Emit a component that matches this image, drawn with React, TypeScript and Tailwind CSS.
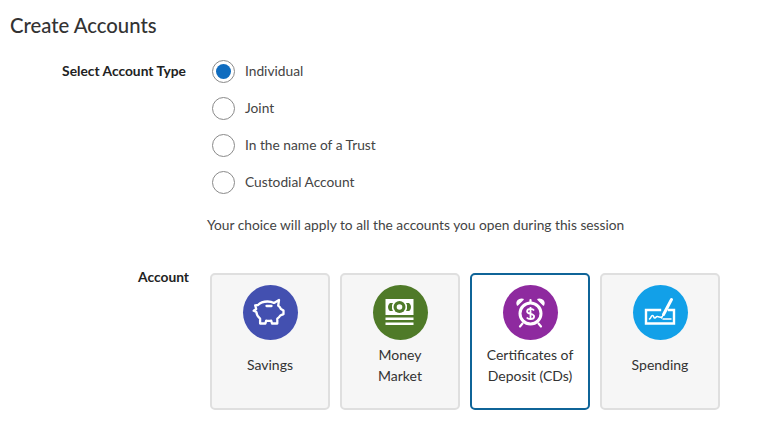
import React from "react";

const Piggy = () => (
  <svg width="55" height="55" viewBox="0 0 55 55" fill="none" stroke="#fff" strokeWidth="2.300" strokeLinejoin="round" strokeLinecap="round">
    <path d="M15 20c2-2.200 5.200-3.500 9.500-3.500 2.800 0 4.800.5 6.500 1.400l5-2.900-.8 5.600c1.300 1 2.200 2.200 2.700 3.400l2.600 1.500v3.600l-3.200 1.400c-.8 1.300-1.800 2.300-3 3.100v4.900h-5.300l-.8-2.900c-1.500.3-3.400.3-5 0l-.8 2.900h-5.300V33.600c-2.300-1.900-3.600-4.200-3.700-6.600l-2.700-1.200 2.500-1.800-1-3.600z" />
    <path d="M23.500 21h5" />
  </svg>
);
const Cash = () => (
  <svg width="55" height="55" viewBox="0 0 55 55">
    <path fill="#fff" d="M12.500 14h28v16h-28z" />
    <path fill="#4f7a28" d="M15 22c0-1.500 1-3.500 2-4h3l-1 2v4l1 2h-3c-1-.5-2-2.500-2-4zM38 22c0-1.500-1-3.500-2-4h-3l1 2v4l-1 2h3c1-.5 2-2.500 2-4z" />
    <circle cx="26.500" cy="22" r="6" fill="#4f7a28" />
    <circle cx="26.500" cy="22" r="2.800" fill="#fff" />
    <path fill="#fff" d="M12.500 32.500h28V35h-28zM12.500 37.500h28V40h-28z" />
  </svg>
);
const Alarm = () => (
  <svg width="55" height="55" viewBox="0 0 55 55" fill="none" stroke="#fff">
    <circle cx="27.500" cy="28.500" r="10.500" strokeWidth="3" />
    <path d="M31 25.500c-.6-1-1.900-1.600-3.500-1.600-1.900 0-3.400 1-3.400 2.500 0 3.300 7 1.700 7 5.100 0 1.500-1.500 2.600-3.600 2.600-1.600 0-3-.6-3.700-1.700M27.500 22v13" strokeWidth="1.800" />
    <path d="M14.500 20c-1.500-3.500 1.500-6.500 5.500-5.500l-5.500 5.500zM40.500 20c1.500-3.500-1.500-6.500-5.500-5.500l5.500 5.500z" fill="#fff" strokeWidth="1.500" strokeLinejoin="round" />
    <path d="M19.500 38.500l-2.500 3M35.500 38.500l2.500 3M27.500 17v-2" strokeWidth="2.200" strokeLinecap="round" />
  </svg>
);
const Check = () => (
  <svg width="55" height="55" viewBox="0 0 55 55" fill="none" stroke="#fff" strokeLinecap="round">
    <path d="M27 25H13v13.500h28V25h-5" strokeWidth="2.400" strokeLinecap="square" />
    <path d="M30.500 29.500l8-15" strokeWidth="3" />
    <path d="M28.500 33l2-3.500" strokeWidth="1.500" />
    <path d="M16.500 34c1.500-.5 1.500-3.500 3-3.500s1 3 2.500 2.500 1-2 2.500-1.500 2 1 4 .5" strokeWidth="1.500" />
    <path d="M30 34h8" strokeWidth="1.500" />
  </svg>
);

const radios = ["Individual", "Joint", "In the name of a Trust", "Custodial Account"];
const cards = [
  { lines: ["Savings"], bg: "bg-[#4350b0]", icon: <Piggy /> },
  { lines: ["Money", "Market"], bg: "bg-[#4f7a28]", icon: <Cash /> },
  { lines: ["Certificates of", "Deposit (CDs)"], bg: "bg-[#8e2a9f]", icon: <Alarm />, active: true },
  { lines: ["Spending"], bg: "bg-[#12a0e8]", icon: <Check /> },
];

export default function App() {
  return (
    <div className="w-[760px] h-[424px] overflow-hidden bg-white text-[#3c3c3c] pt-[13px] pl-[10px] font-['Lato','Open_Sans',sans-serif]">
      <h1 className="text-[20.3px] leading-[24px] font-medium text-[#333]">Create Accounts</h1>
      <div className="flex mt-[23px]">
        <div className="w-[176px] text-right text-[13.8px] leading-[22px] font-bold text-[#222]">Select Account Type</div>
        <div className="ml-[26px]">
          <div className="flex flex-col gap-[14px]">
            {radios.map((r, i) => (
              <div key={r} className="flex items-center h-[23px]">
                <span className="w-[23px] h-[23px] shrink-0 rounded-full border border-[#8a8a8a] bg-white flex items-center justify-center">
                  {i === 0 && <span className="w-[15px] h-[15px] rounded-full bg-[#0f6cbf]" />}
                </span>
                <span className="ml-[10px] text-[13.75px] text-[#444]">{r}</span>
              </div>
            ))}
          </div>
          <p className="mt-[21px] -ml-[5px] text-[13.75px] leading-[20px] text-[#444]">
            Your choice will apply to all the accounts you open during this session
          </p>
        </div>
      </div>
      <div className="flex mt-[38px]">
        <div className="w-[179px] -mt-[5px] text-right text-[13.8px] leading-[18px] font-bold text-[#222]">Account</div>
        <div className="ml-[21px] flex gap-[10px]">
          {cards.map((c) => (
            <div
              key={c.lines[0]}
              className={`w-[120px] h-[137px] rounded-[5px] flex flex-col items-center pt-[10px] border-2 ${
                c.active ? "border-[#0f6498] bg-white" : "border-[#dfdfdf] bg-[#f6f6f6]"
              }`}
            >
              <div className={`w-[55px] h-[55px] shrink-0 rounded-full ${c.bg}`}>{c.icon}</div>
              <div className={`w-full text-center text-[14px] leading-[21px] text-[#333] flex flex-col justify-center h-[46px] ${c.lines.length === 1 ? "mt-[1px]" : "mt-[2px]"}`}>
                {c.lines.map((l) => (
                  <div key={l}>{l}</div>
                ))}
              </div>
            </div>
          ))}
        </div>
      </div>
    </div>
  );
}
